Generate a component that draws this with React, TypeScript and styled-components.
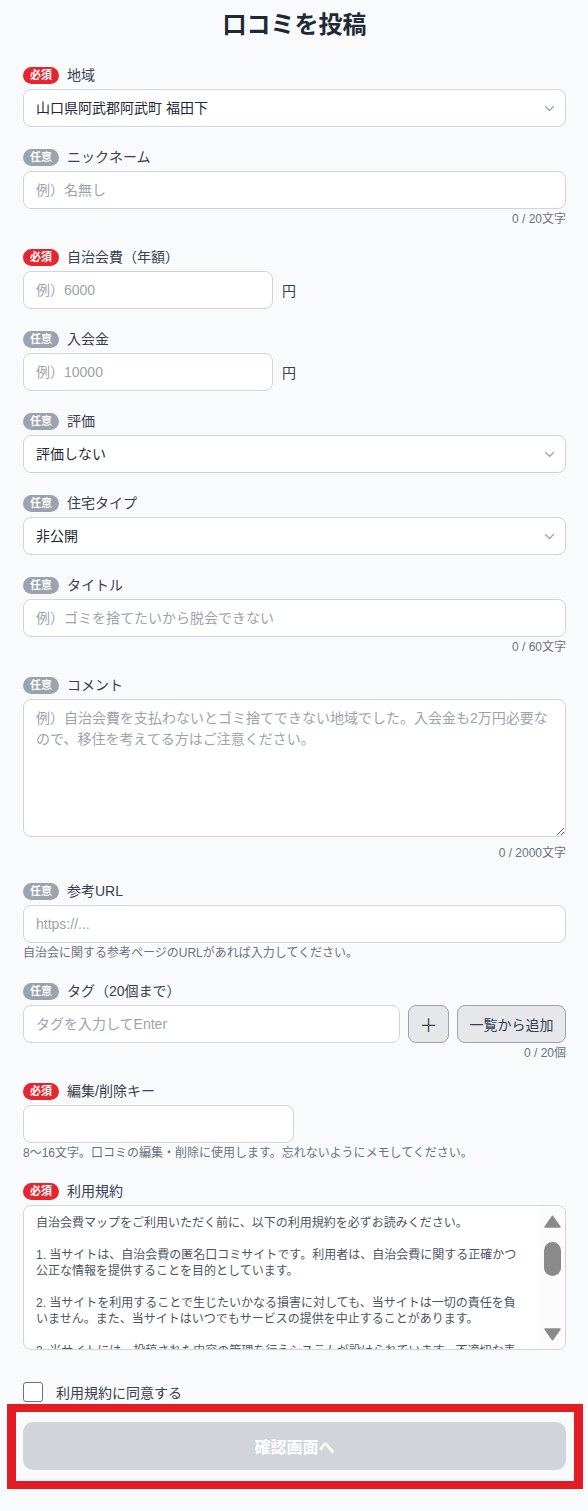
import React from "react";
import styled, { createGlobalStyle } from "styled-components";

const GlobalStyle = createGlobalStyle`
  *, *::before, *::after { box-sizing: border-box; }
  html, body { margin: 0; padding: 0; }
  body {
    background: #f9fafb;
    font-family: "Liberation Sans", "Noto Sans CJK JP", sans-serif;
    color: #374151;
  }
`;

const Page = styled.main`
  padding: 9px 22px 21px 23px;
`;

const Title = styled.h1`
  margin: 0 0 24px;
  font-size: 24px;
  line-height: 32px;
  font-weight: 700;
  text-align: center;
  color: #1f2937;
`;

const Form = styled.form`
  display: flex;
  flex-direction: column;
`;

const Field = styled.div<{ $gap?: number }>`
  margin-bottom: ${(p) => p.$gap ?? 20}px;
`;

const LabelRow = styled.label`
  display: flex;
  align-items: center;
  gap: 8px;
  height: 20px;
  margin-bottom: 4px;
  font-size: 14px;
  line-height: 20px;
  color: #374151;
`;

const Badge = styled.span<{ $required?: boolean }>`
  display: inline-flex;
  align-items: center;
  justify-content: center;
  height: 17px;
  padding: 0 7px;
  border-radius: 9px;
  font-size: 11px;
  font-weight: 700;
  line-height: 1;
  color: #ffffff;
  background: ${(p) => (p.$required ? "#e3262f" : "#9ca3af")};
`;

const TextInput = styled.input<{ $width?: number }>`
  display: block;
  width: ${(p) => (p.$width ? `${p.$width}px` : "100%")};
  height: 38px;
  padding: 0 12px;
  border: 1px solid #d1d5db;
  border-radius: 8px;
  background: #ffffff;
  font-family: inherit;
  font-size: 14px;
  color: #1f2937;
  outline: none;
  &::placeholder { color: #9ca3af; }
`;

const InlineRow = styled.div`
  display: flex;
  align-items: center;
  gap: 9px;
`;

const Unit = styled.span`
  font-size: 14px;
  color: #374151;
`;

const SelectWrap = styled.div`
  position: relative;
`;

const Select = styled.select`
  display: block;
  width: 100%;
  height: 38px;
  padding: 0 36px 0 12px;
  border: 1px solid #d1d5db;
  border-radius: 8px;
  background: #ffffff;
  appearance: none;
  font-family: inherit;
  font-size: 14px;
  color: #1f2937;
  outline: none;
`;

const Chevron = styled.svg`
  position: absolute;
  right: 11px;
  top: 50%;
  width: 11px;
  height: 11px;
  margin-top: -5px;
  pointer-events: none;
`;

const Note = styled.div<{ $top?: number; $align?: "left" | "right" }>`
  margin-top: ${(p) => p.$top ?? 2}px;
  font-size: 12px;
  line-height: 16px;
  color: #6b7280;
  text-align: ${(p) => p.$align ?? "right"};
`;

const TextArea = styled.textarea`
  display: block;
  width: 100%;
  height: 138px;
  padding: 8px 12px;
  border: 1px solid #d1d5db;
  border-radius: 8px;
  background: #ffffff;
  font-family: inherit;
  font-size: 14px;
  line-height: 21px;
  color: #1f2937;
  resize: vertical;
  outline: none;
  &::placeholder { color: #9ca3af; }
`;

const TagRow = styled.div`
  display: flex;
  gap: 8px;
`;

const TagInput = styled(TextInput)`
  flex: 1;
  width: auto;
`;

const GrayButton = styled.button<{ $width: number }>`
  flex: none;
  width: ${(p) => p.$width}px;
  height: 38px;
  padding: 0;
  border: 1px solid #9ca3af;
  border-radius: 8px;
  background: #e5e7eb;
  font-family: inherit;
  font-size: ${(p) => (p.$width < 60 ? 18 : 14)}px;
  color: #374151;
  cursor: pointer;
`;

const TermsBox = styled.div`
  display: flex;
  height: 145px;
  border: 1px solid #d1d5db;
  border-radius: 8px;
  background: #ffffff;
  overflow: hidden;
`;

const TermsText = styled.div`
  flex: 1;
  padding: 9px 17px 0 12px;
  overflow-y: auto;
  scrollbar-width: none;
  font-size: 12px;
  line-height: 16px;
  color: #4b5563;
  white-space: pre-wrap;
  &::-webkit-scrollbar { display: none; }
`;

const ScrollColumn = styled.div`
  flex: none;
  width: 26px;
  display: flex;
  flex-direction: column;
  align-items: center;
  padding: 9px 0 8px;
  background: #fcfcfc;
`;

const ScrollArrow = styled.svg`
  width: 17px;
  height: 13px;
  flex: none;
`;

const ScrollThumb = styled.div`
  width: 17px;
  height: 34px;
  margin-top: 14px;
  border-radius: 9px;
  background: #8a8a8a;
  flex: none;
`;

const ScrollSpacer = styled.div`
  flex: 1;
`;

const AgreeRow = styled.label`
  display: flex;
  align-items: center;
  gap: 13px;
  height: 20px;
  font-size: 14px;
  color: #374151;
`;

const Checkbox = styled.input`
  appearance: none;
  margin: 0;
  width: 20px;
  height: 20px;
  border: 1px solid #6b7280;
  border-radius: 3px;
  background: #ffffff;
  flex: none;
`;

const Highlight = styled.div`
  margin: 2px -17px 0 -16px;
  padding: 10px 8px 11px 7px;
  border-style: solid;
  border-color: #e31b23;
  border-width: 8px 9px;
`;

const SubmitButton = styled.button`
  display: block;
  width: 100%;
  height: 48px;
  border: none;
  border-radius: 10px;
  background: #d1d5db;
  font-family: inherit;
  font-size: 16px;
  font-weight: 700;
  color: #ffffff;
  cursor: not-allowed;
`;

const ChevronIcon = () => (
  <Chevron viewBox="0 0 11 11" fill="none">
    <path d="M1.5 3.5l4 4 4-4" stroke="#9ca3af" strokeWidth="1.2" strokeLinecap="round" strokeLinejoin="round" />
  </Chevron>
);

const Label: React.FC<{ required?: boolean; children: React.ReactNode }> = ({ required, children }) => (
  <LabelRow>
    <Badge $required={required}>{required ? "必須" : "任意"}</Badge>
    {children}
  </LabelRow>
);

const SelectField: React.FC<{ value: string; options: string[] }> = ({ value, options }) => (
  <SelectWrap>
    <Select defaultValue={value}>
      {options.map((o) => (
        <option key={o} value={o}>
          {o}
        </option>
      ))}
    </Select>
    <ChevronIcon />
  </SelectWrap>
);

const TERMS = `自治会費マップをご利用いただく前に、以下の利用規約を必ずお読みください。

1. 当サイトは、自治会費の匿名口コミサイトです。利用者は、自治会費に関する正確かつ公正な情報を提供することを目的としています。

2. 当サイトを利用することで生じたいかなる損害に対しても、当サイトは一切の責任を負いません。また、当サイトはいつでもサービスの提供を中止することがあります。

3. 当サイトには、投稿された内容の管理を行うシステムが設けられています。不適切な表現を含む投稿は、予告なく削除される場合があります。

4. 投稿された内容の著作権は投稿者に帰属しますが、当サイトは投稿内容を無償で利用できるものとします。`;

export default function App() {
  return (
    <>
      <GlobalStyle />
      <Page>
        <Title>口コミを投稿</Title>
        <Form onSubmit={(e) => e.preventDefault()}>
          <Field>
            <Label required>地域</Label>
            <SelectField value="山口県阿武郡阿武町 福田下" options={["山口県阿武郡阿武町 福田下"]} />
          </Field>

          <Field>
            <Label>ニックネーム</Label>
            <TextInput placeholder="例）名無し" />
            <Note>0 / 20文字</Note>
          </Field>

          <Field>
            <Label required>自治会費（年額）</Label>
            <InlineRow>
              <TextInput $width={250} placeholder="例）6000" />
              <Unit>円</Unit>
            </InlineRow>
          </Field>

          <Field>
            <Label>入会金</Label>
            <InlineRow>
              <TextInput $width={250} placeholder="例）10000" />
              <Unit>円</Unit>
            </InlineRow>
          </Field>

          <Field>
            <Label>評価</Label>
            <SelectField value="評価しない" options={["評価しない", "★1", "★2", "★3", "★4", "★5"]} />
          </Field>

          <Field>
            <Label>住宅タイプ</Label>
            <SelectField value="非公開" options={["非公開", "持ち家", "賃貸"]} />
          </Field>

          <Field>
            <Label>タイトル</Label>
            <TextInput placeholder="例）ゴミを捨てたいから脱会できない" />
            <Note>0 / 60文字</Note>
          </Field>

          <Field>
            <Label>コメント</Label>
            <TextArea placeholder="例）自治会費を支払わないとゴミ捨てできない地域でした。入会金も2万円必要なので、移住を考えてる方はご注意ください。" />
            <Note $top={8}>0 / 2000文字</Note>
          </Field>

          <Field>
            <Label>参考URL</Label>
            <TextInput placeholder="https://..." />
            <Note $align="left">自治会に関する参考ページのURLがあれば入力してください。</Note>
          </Field>

          <Field>
            <Label>タグ（20個まで）</Label>
            <TagRow>
              <TagInput placeholder="タグを入力してEnter" />
              <GrayButton type="button" $width={41}>＋</GrayButton>
              <GrayButton type="button" $width={109}>一覧から追加</GrayButton>
            </TagRow>
            <Note>0 / 20個</Note>
          </Field>

          <Field>
            <Label required>編集/削除キー</Label>
            <TextInput $width={271} type="password" />
            <Note $align="left">8〜16文字。口コミの編集・削除に使用します。忘れないようにメモしてください。</Note>
          </Field>

          <Field $gap={32}>
            <Label required>利用規約</Label>
            <TermsBox>
              <TermsText>{TERMS}</TermsText>
              <ScrollColumn>
                <ScrollArrow viewBox="0 0 17 13">
                  <path d="M8.5 1.2 L16 12 H1 Z" fill="#8a8a8a" stroke="#8a8a8a" strokeWidth="1.4" strokeLinejoin="round" />
                </ScrollArrow>
                <ScrollThumb />
                <ScrollSpacer />
                <ScrollArrow viewBox="0 0 17 13">
                  <path d="M8.5 11.8 L16 1 H1 Z" fill="#8a8a8a" stroke="#8a8a8a" strokeWidth="1.4" strokeLinejoin="round" />
                </ScrollArrow>
              </ScrollColumn>
            </TermsBox>
          </Field>

          <AgreeRow>
            <Checkbox type="checkbox" />
            利用規約に同意する
          </AgreeRow>

          <Highlight>
            <SubmitButton type="submit" disabled>
              確認画面へ
            </SubmitButton>
          </Highlight>
        </Form>
      </Page>
    </>
  );
}
